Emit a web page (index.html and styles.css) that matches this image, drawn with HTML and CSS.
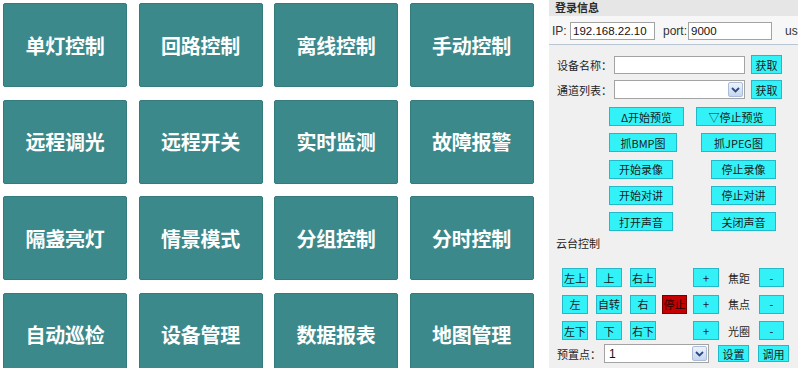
FILE: index.html
```html
<!DOCTYPE html>
<html lang="zh">
<head>
<meta charset="utf-8">
<link rel="stylesheet" href="styles.css">
</head>
<body>
<div class="page">
  <div class="tiles">
    <div class="tile">单灯控制</div>
    <div class="tile">回路控制</div>
    <div class="tile">离线控制</div>
    <div class="tile">手动控制</div>
    <div class="tile">远程调光</div>
    <div class="tile">远程开关</div>
    <div class="tile">实时监测</div>
    <div class="tile">故障报警</div>
    <div class="tile">隔盏亮灯</div>
    <div class="tile">情景模式</div>
    <div class="tile">分组控制</div>
    <div class="tile">分时控制</div>
    <div class="tile">自动巡检</div>
    <div class="tile">设备管理</div>
    <div class="tile">数据报表</div>
    <div class="tile">地图管理</div>
  </div>

  <div class="panel">
    <div class="head">登录信息</div>
    <div class="iprow">
      <span class="lbl-ip">IP:</span>
      <div class="inp inp-ip">192.168.22.10</div>
      <span class="lbl-port">port:</span>
      <div class="inp inp-port">9000</div>
      <span class="lbl-us">us</span>
    </div>

    <div class="frow first">
      <span class="flabel">设备名称：</span>
      <div class="inp inp-wide"></div>
      <div class="btn btn-get">获取</div>
    </div>
    <div class="frow second">
      <span class="flabel">通道列表：</span>
      <div class="sel sel-wide"><span class="selarrow"><svg width="9" height="6" viewBox="0 0 9 6"><path d="M1 1 L4.5 4.5 L8 1" fill="none" stroke="#2a4a8a" stroke-width="1.8"/></svg></span></div>
      <div class="btn btn-get">获取</div>
    </div>

    <div class="brows">
      <div class="brow"><div class="btn w75">Δ开始预览</div><div class="btn w80">▽停止预览</div></div>
      <div class="brow"><div class="btn w68">抓BMP图</div><div class="btn w75">抓JPEG图</div></div>
      <div class="brow"><div class="btn w64">开始录像</div><div class="btn w65">停止录像</div></div>
      <div class="brow"><div class="btn w64">开始对讲</div><div class="btn w65">停止对讲</div></div>
      <div class="brow"><div class="btn w64">打开声音</div><div class="btn w65">关闭声音</div></div>
    </div>

    <div class="ptzlabel">云台控制</div>
    <div class="ptz">
      <div class="btn pb">左上</div><div class="btn pb">上</div><div class="btn pb">右上</div><div></div><div class="btn pb">+</div><div class="plbl">焦距</div><div class="btn pb pm">-</div>
      <div class="btn pb">左</div><div class="btn pb">自转</div><div class="btn pb">右</div><div class="btn pb stop">停止</div><div class="btn pb">+</div><div class="plbl">焦点</div><div class="btn pb pm">-</div>
      <div class="btn pb">左下</div><div class="btn pb">下</div><div class="btn pb">右下</div><div></div><div class="btn pb">+</div><div class="plbl">光圈</div><div class="btn pb pm">-</div>
    </div>

    <div class="prow">
      <span class="plabel">预置点：</span>
      <div class="sel sel-preset"><span class="seltext">1</span><span class="selarrow"><svg width="9" height="6" viewBox="0 0 9 6"><path d="M1 1 L4.5 4.5 L8 1" fill="none" stroke="#2a4a8a" stroke-width="1.8"/></svg></span></div>
      <div class="btn w31">设置</div>
      <div class="btn w31">调用</div>
    </div>
  </div>
</div>
</body>
</html>
```

FILE: styles.css
```css
html, body {
  margin: 0;
  padding: 0;
  background: #ffffff;
}
body {
  width: 800px;
  height: 368px;
  overflow: hidden;
  font-family: "Noto Sans CJK SC", "Liberation Sans", sans-serif;
}
.page {
  display: flex;
  align-items: flex-start;
  height: 368px;
}
.tiles {
  width: 546px;
  padding: 3px 0 0 3px;
  box-sizing: border-box;
  display: grid;
  grid-template-columns: repeat(4, 124px);
  grid-auto-rows: 84px;
  column-gap: 11.5px;
  row-gap: 12.67px;
  flex-shrink: 0;
}
.tile {
  background: #3c898b;
  border: 1px solid #347b7d;
  border-radius: 2px;
  color: #ffffff;
  font-size: 20px;
  font-weight: 700;
  display: flex;
  align-items: center;
  justify-content: center;
  letter-spacing: -0.3px;
}
.panel {
  margin-left: 3px;
  width: 249px;
  height: 368px;
  background: #f0f0f0;
  flex-shrink: 0;
  color: #1e1e1e;
  font-size: 11px;
}
.head {
  height: 16px;
  line-height: 15px;
  background: #e6e6e6;
  padding-left: 6px;
  font-size: 11px;
  font-weight: 700;
  color: #2a2a2a;
}
.iprow {
  height: 28px;
  background: #f7f7f7;
  border-bottom: 1px solid #b9c6d3;
  display: flex;
  align-items: center;
  padding: 2px 0 0 3px;
  box-sizing: border-box;
  height: 29px;
  font-family: "Liberation Sans", Arial, sans-serif;
  font-size: 12px;
  color: #333;
}
.lbl-ip { width: 18px; }
.lbl-port { margin-left: 8px; width: 25px; }
.lbl-us { margin-left: 13px; }
.inp {
  height: 18px;
  box-sizing: border-box;
  background: #ffffff;
  border: 1px solid #a3a3a3;
  font-family: "Liberation Sans", Arial, sans-serif;
  font-size: 11.5px;
  line-height: 16px;
  padding-left: 2px;
  color: #111;
}
.inp-ip { width: 85px; }
.inp-port { width: 84px; }
.frow {
  display: flex;
  align-items: center;
  height: 19px;
  padding-left: 8px;
}
.frow.first { margin-top: 10px; }
.frow.second { margin-top: 6px; }
.flabel { width: 57px; white-space: nowrap; }
.inp-wide { width: 131px; }
.sel {
  height: 19px;
  box-sizing: border-box;
  background: #ffffff;
  border: 1px solid #a3a3a3;
  display: flex;
  align-items: center;
  justify-content: space-between;
  padding: 0 1px 0 4px;
  font-family: "Liberation Sans", Arial, sans-serif;
  font-size: 12px;
}
.sel-wide { width: 131px; justify-content: flex-end; }
.selarrow {
  width: 15px;
  height: 15px;
  box-sizing: border-box;
  border: 1px solid #a9bcd8;
  border-radius: 2px;
  background: linear-gradient(#eef3fb, #c5d6ef);
  display: flex;
  align-items: center;
  justify-content: center;
}
.btn {
  height: 19px;
  box-sizing: border-box;
  background: #33f2f7;
  border: 1px solid #22b9c9;
  display: flex;
  align-items: center;
  justify-content: center;
  font-size: 11px;
  color: #1a1a1a;
  white-space: nowrap;
}
.btn-get { width: 31px; margin-left: 6px; }
.brows {
  margin: 8px 0 0 60px;
  width: 167px;
  display: flex;
  flex-direction: column;
  row-gap: 7.3px;
}
.brow {
  display: flex;
  justify-content: space-between;
}
.w64 { width: 64px; }
.w65 { width: 65px; }
.w68 { width: 68px; }
.w75 { width: 75px; }
.w80 { width: 80px; }
.w31 { width: 31px; height: 17px; }
.ptzlabel {
  margin: 5px 0 0 7px;
  height: 14px;
  line-height: 14px;
}
.ptz {
  margin: 18px 0 0 13px;
  display: grid;
  grid-template-columns: 34px 34px 32px 31px 26px 40px 25px;
  grid-auto-rows: 19px;
  row-gap: 7.5px;
}
.pb { width: 26px; }
.pm { width: 25px; }
.plbl {
  display: flex;
  align-items: center;
  justify-content: center;
}
.stop {
  width: 25px;
  background: #c40000;
  border-color: #7a0000;
  color: #2a0000;
}
.prow {
  margin-top: 4px;
  padding-left: 8px;
  display: flex;
  align-items: center;
  height: 19px;
}
.plabel { width: 47px; white-space: nowrap; }
.sel-preset { width: 105px; margin-right: 9px; }
.seltext { color: #111; }
.prow .w31 + .w31 { margin-left: 9px; }
```
